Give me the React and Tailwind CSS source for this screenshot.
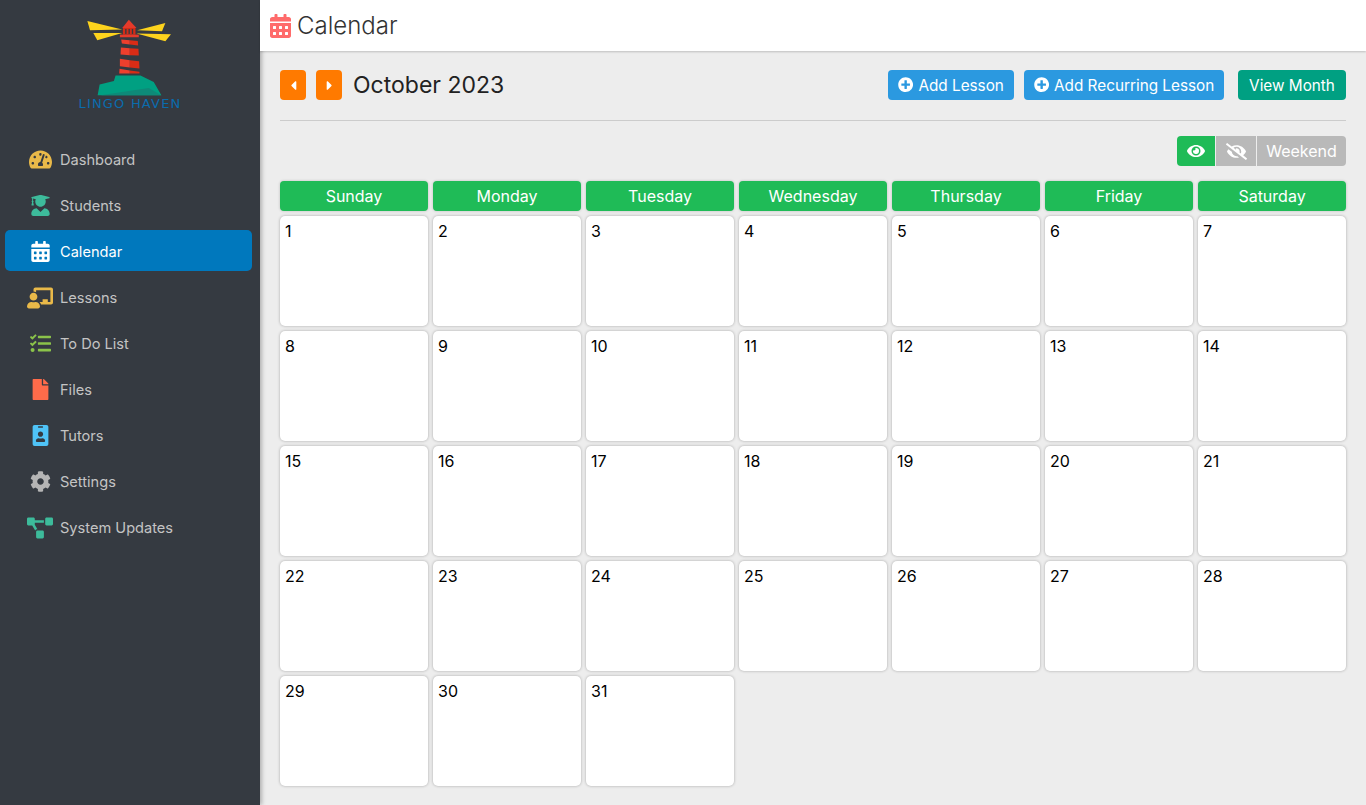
import React from 'react';
import {
  FaTachometerAlt, FaUserGraduate, FaCalendarAlt, FaChalkboardTeacher, FaTasks, FaFile,
  FaIdBadge, FaCog, FaProjectDiagram, FaCaretLeft, FaCaretRight, FaPlusCircle, FaEye, FaEyeSlash,
} from 'react-icons/fa';

const navItems = [
  { label: 'Dashboard', icon: FaTachometerAlt, color: 'text-[#e9b949]', size: 'text-[23px]' },
  { label: 'Students', icon: FaUserGraduate, color: 'text-[#3dbb9b]', size: 'text-[21px]' },
  { label: 'Calendar', icon: FaCalendarAlt, color: 'text-white', size: 'text-[21px]', active: true },
  { label: 'Lessons', icon: FaChalkboardTeacher, color: 'text-[#e9b949]', size: 'text-[26px]' },
  { label: 'To Do List', icon: FaTasks, color: 'text-[#8bc34a]', size: 'text-[21px]' },
  { label: 'Files', icon: FaFile, color: 'text-[#ff6b4a]', size: 'text-[21px]' },
  { label: 'Tutors', icon: FaIdBadge, color: 'text-[#4fc3f7]', size: 'text-[21px]' },
  { label: 'Settings', icon: FaCog, color: 'text-[#b5b5b5]', size: 'text-[21px]' },
  { label: 'System Updates', icon: FaProjectDiagram, color: 'text-[#3dbb9b]', size: 'text-[26px]' },
];

const weekDays = ['Sunday', 'Monday', 'Tuesday', 'Wednesday', 'Thursday', 'Friday', 'Saturday'];
const days = Array.from({ length: 31 }, (_, i) => i + 1);

function Logo() {
  return (
    <svg viewBox="235 55 310 235" className="h-[78px] w-[103px]">
      <polygon points="260,64 365,90 268,92" fill="#fdd31d" />
      <polygon points="278,100 365,100 290,122" fill="#fdd31d" />
      <polygon points="495,70 410,92 485,95" fill="#fdd31d" />
      <polygon points="408,102 512,104 495,125" fill="#fdd31d" />
      <polygon points="385,60 408,85 365,85" fill="#e53a2a" />
      <rect x="367" y="85" width="38" height="20" fill="#d42b16" />
      <rect x="374" y="88" width="4" height="15" fill="#343a40" />
      <rect x="384" y="88" width="4" height="15" fill="#343a40" />
      <rect x="394" y="88" width="4" height="15" fill="#343a40" />
      <rect x="358" y="105" width="57" height="8" fill="#e53a2a" />
      <polygon points="362,120 388,122 388,135 364,132" fill="#ee3f2d" />
      <polygon points="388,122 412,124 413,138 388,135" fill="#d92c16" />
      <polygon points="361,144 388,146 388,167 360,165" fill="#ee3f2d" />
      <polygon points="388,146 414,148 415,168 388,167" fill="#d92c16" />
      <polygon points="358,178 388,182 388,204 358,200" fill="#ee3f2d" />
      <polygon points="388,182 416,185 417,207 388,204" fill="#d92c16" />
      <polygon points="357,208 388,213 388,222 356,222" fill="#ee3f2d" />
      <polygon points="388,213 417,217 417,222 388,222" fill="#d92c16" />
      <polygon points="345,228 420,228 460,248 483,288 291,288 297,255 340,245" fill="#00a082" />
      <polygon points="300,288 445,266 483,288" fill="#0e8a78" />
    </svg>
  );
}

function Sidebar() {
  return (
    <aside className="flex w-[260px] shrink-0 flex-col bg-[#353a41] shadow-[2px_0_4px_rgba(0,0,0,0.25)]">
      <div className="flex h-[138px] flex-col items-center pt-[18px]">
        <Logo />
        <div className="mt-[1px] font-['DejaVu_Sans'] text-[13px] leading-[14px] tracking-[1.2px] text-[#0a6cad]">LINGO HAVEN</div>
      </div>
      <nav className="flex flex-col gap-[5px] pl-[5px] pr-2">
        {navItems.map(({ label, icon: Icon, color, size, active }) => (
          <a
            key={label}
            className={`flex h-[41px] items-center rounded-[5px] pt-[2px] ${active ? 'bg-[#0078bd] text-white' : 'text-[#c4c4c4]'}`}
          >
            <span className={`flex w-[55px] shrink-0 justify-center pl-[15px] ${color} ${size}`}>
              <Icon />
            </span>
            <span className="pt-[2px] text-[14.6px]">{label}</span>
          </a>
        ))}
      </nav>
    </aside>
  );
}

function ActionButton({ className, icon, children }) {
  return (
    <button className={`flex h-[30px] items-center justify-center gap-[5px] rounded-[4px] text-[15.3px] text-white ${className}`}>
      {icon}
      <span className="pt-[2px]">{children}</span>
    </button>
  );
}

export default function App() {
  return (
    <div className="flex h-[805px] overflow-hidden bg-[#ededed] font-['Inter',sans-serif]">
      <Sidebar />
      <main className="flex min-w-0 flex-1 flex-col">
        <header className="flex h-[51px] items-center gap-[6px] bg-white pl-[10px] shadow-[0_1px_2px_rgba(0,0,0,0.2)]">
          <FaCalendarAlt className="h-[24px] w-[21px] text-[#ff6b6b]" />
          <h1 className="text-[24px] font-light text-[#333]">Calendar</h1>
        </header>
        <div className="flex flex-col px-[20px] pt-[19px]">
          <div className="flex h-[30px] items-center">
            <button className="flex h-[30px] w-[26px] items-center justify-center rounded-[4px] bg-[#ff7a00] text-[15px] text-white"><FaCaretLeft /></button>
            <button className="ml-[10px] flex h-[30px] w-[26px] items-center justify-center rounded-[4px] bg-[#ff7a00] text-[15px] text-white"><FaCaretRight /></button>
            <h2 className="ml-[11px] pt-[1px] text-[23px] font-normal text-[#222]">October 2023</h2>
            <div className="ml-auto flex gap-[10px]">
              <ActionButton className="w-[126px] bg-[#2b99e0]" icon={<FaPlusCircle />}>Add Lesson</ActionButton>
              <ActionButton className="w-[200px] bg-[#2b99e0]" icon={<FaPlusCircle />}>Add Recurring Lesson</ActionButton>
              <ActionButton className="ml-[4px] w-[108px] bg-[#00a082]">View Month</ActionButton>
            </div>
          </div>
          <hr className="mt-[20px] border-[#cccccc]" />
          <div className="mt-[15px] flex justify-end gap-px text-white">
            <button className="flex h-[30px] w-[38px] items-center justify-center rounded-l-[4px] bg-[#1fbb57] text-[18px]"><FaEye /></button>
            <button className="flex h-[30px] w-[40px] items-center justify-center bg-[#b9b9b9] text-[21px]"><FaEyeSlash /></button>
            <button className="flex h-[30px] w-[89px] items-center justify-center rounded-r-[4px] bg-[#b9b9b9] text-[16px]">Weekend</button>
          </div>
          <div className="mt-[15px] grid grid-cols-7 gap-[5px]">
            {weekDays.map((d) => (
              <div key={d} className="flex h-[30px] items-center justify-center rounded-[4px] bg-[#1fbb57] text-[16px] text-white shadow-[0_0_3px_rgba(0,0,0,0.2)]">{d}</div>
            ))}
            {days.map((d) => (
              <div key={d} className="h-[110px] rounded-[5px] bg-white px-[5px] pt-[3px] text-[16px] text-black shadow-[0_0_3px_rgba(0,0,0,0.3)]">{d}</div>
            ))}
          </div>
        </div>
      </main>
    </div>
  );
}
